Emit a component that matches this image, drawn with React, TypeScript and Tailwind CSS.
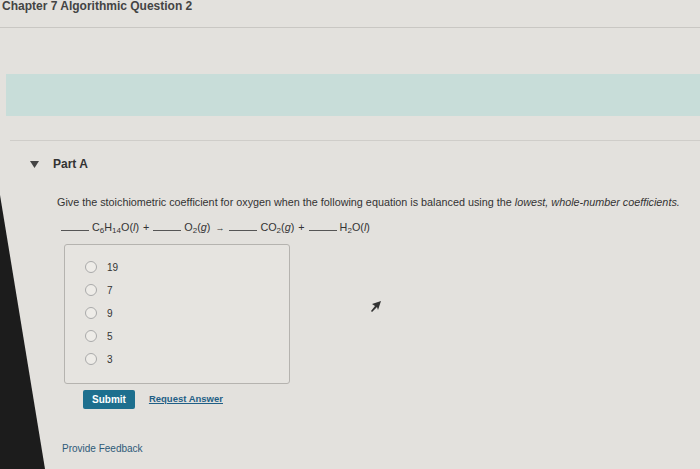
import React from 'react';

const options = ['19', '7', '9', '5', '3'];

const Blank = () => <span className="inline-block w-[28px] border-b border-[#555] mr-[3px] align-baseline" />;

export default function App() {
  return (
    <div
      className="relative w-[700px] h-[469px] overflow-hidden bg-[#e3e1dd] text-[#333]"
      style={{ fontFamily: '"Liberation Sans", Arial, sans-serif' }}
    >
      {/* header */}
      <div className="h-[28px] border-b border-[#c9c7c3]">
        <div className="pl-[2px] text-[12px] leading-[13px] font-bold text-[#444]">Chapter 7 Algorithmic Question 2</div>
      </div>

      <div className="h-[46px]" />
      <div className="ml-[6px] h-[42px] bg-[#c8ddd9]" />
      <div className="h-[24px]" />
      <div className="ml-[10px] border-t border-[#cfcdc9]" />

      {/* Part A */}
      <div className="pl-[30px] pt-[14px] flex items-center gap-[14px]">
        <svg width="9" height="7" viewBox="0 0 9 7">
          <polygon points="0,0 9,0 4.5,7" fill="#444" />
        </svg>
        <span className="text-[12px] font-bold text-[#333]">Part A</span>
      </div>

      <div className="pl-[57px] pt-[22px]">
        <p className="text-[10.8px] text-[#333] leading-[14px]">
          Give the stoichiometric coefficient for oxygen when the following equation is balanced using the{' '}
          <i>lowest, whole-number coefficients.</i>
        </p>
        <div className="mt-[10px] pl-[4px] text-[10.8px] text-[#333] flex items-baseline">
          <Blank />
          <span>
            C<sub className="text-[8px]">6</sub>H<sub className="text-[8px]">14</sub>O(<i>l</i>)
          </span>
          <span className="mx-[4px]">+</span>
          <Blank />
          <span>
            O<sub className="text-[8px]">2</sub>(<i>g</i>)
          </span>
          <span className="mx-[5px] text-[9px]">→</span>
          <Blank />
          <span>
            CO<sub className="text-[8px]">2</sub>(<i>g</i>)
          </span>
          <span className="mx-[4px]">+</span>
          <Blank />
          <span>
            H<sub className="text-[8px]">2</sub>O(<i>l</i>)
          </span>
        </div>

        <div className="mt-[8px] ml-[7px] w-[226px] h-[140px] border border-[#b5b3af] rounded-[3px] bg-[#e6e4e0] pt-[16px] pl-[20px] flex flex-col gap-[10px]">
          {options.map((o) => (
            <label key={o} className="flex items-center gap-[10px] h-[13px]">
              <span className="w-[12px] h-[12px] rounded-full border border-[#aaa] bg-[#eeece8]" />
              <span className="text-[10px] text-[#333]">{o}</span>
            </label>
          ))}
        </div>

        <div className="mt-[6px] ml-[26px] flex items-center gap-[14px]">
          <button className="h-[19px] px-[9px] bg-[#1d6f8e] text-white text-[10px] font-bold rounded-[2px]">Submit</button>
          <span className="text-[9.5px] font-bold text-[#1f5f86] underline">Request Answer</span>
        </div>

        <div className="mt-[32px] ml-[5px] text-[10px] text-[#2e5a78]">Provide Feedback</div>
      </div>

      {/* cursor */}
      <svg className="absolute left-[369px] top-[299px]" width="14" height="14" viewBox="0 0 14 14">
        <polygon points="12,2 3,5 6,7 2,12 3,13 8,8 9,11" fill="#333" />
      </svg>

      {/* screen bezel */}
      <svg className="absolute left-0 top-0" width="60" height="469" viewBox="0 0 60 469">
        <polygon points="0,195 45,469 0,469" fill="#1c1c1c" />
      </svg>
    </div>
  );
}
